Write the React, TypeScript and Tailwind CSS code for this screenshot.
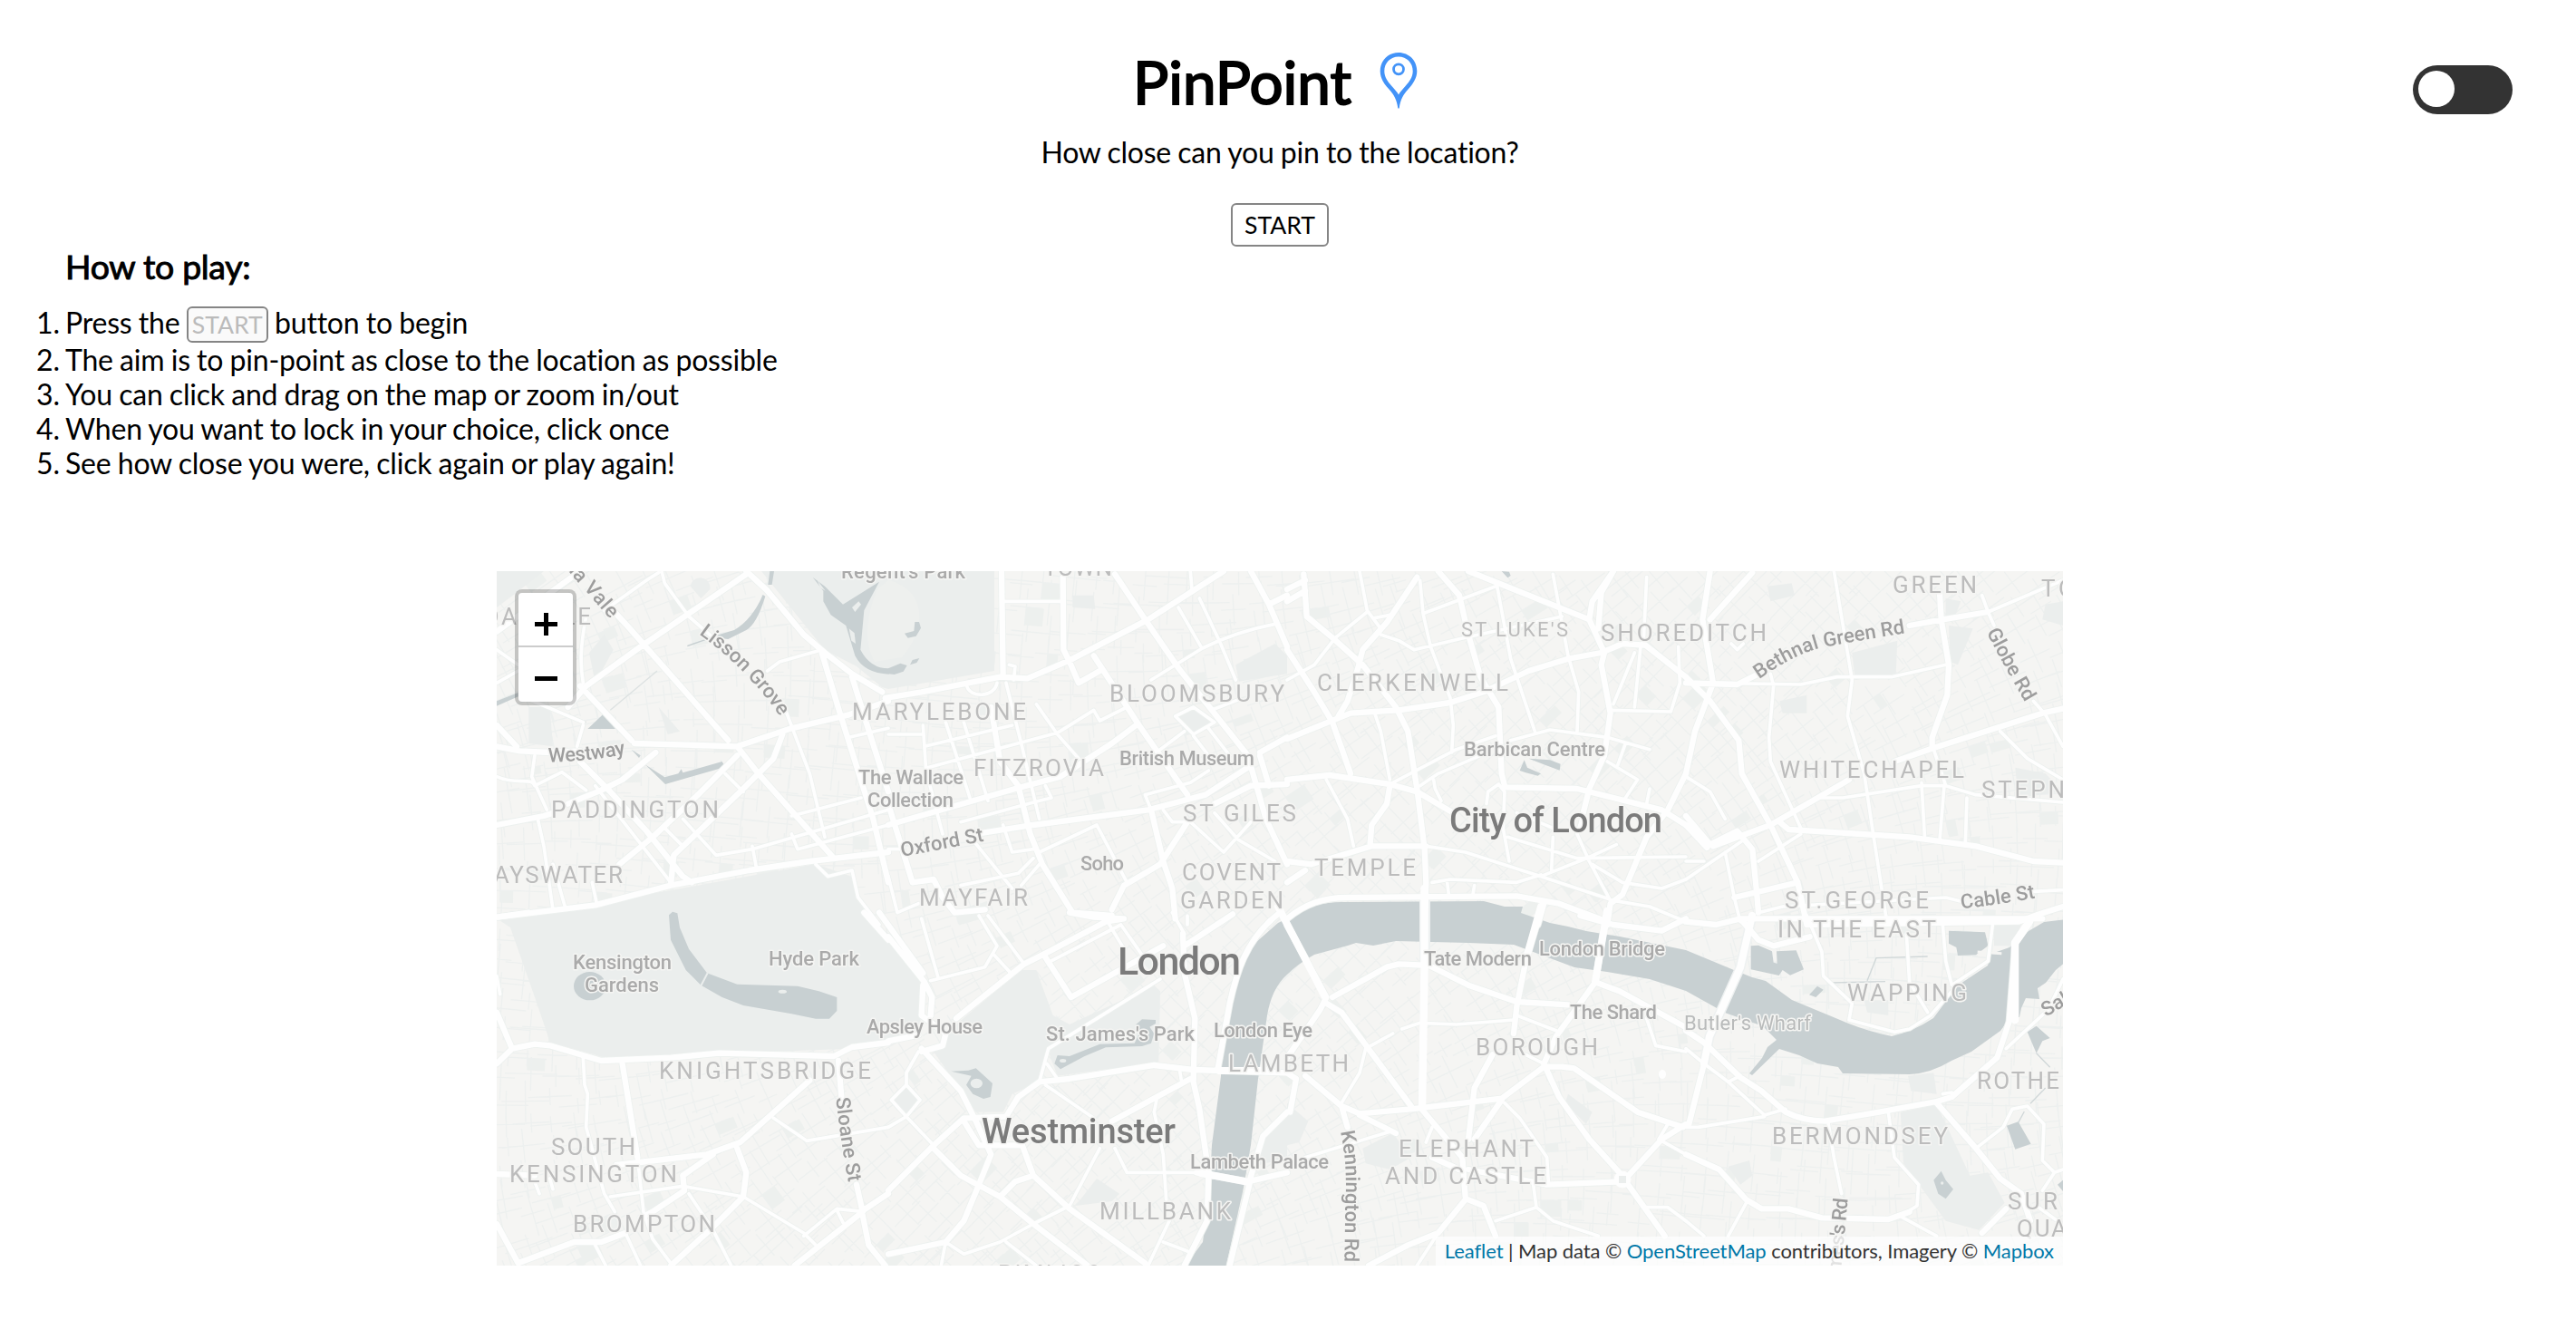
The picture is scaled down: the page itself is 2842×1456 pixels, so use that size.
import React from "react";

type District = { x: number; y: number; major: string; minor: string };

// Each district is drawn on its own 1320x1200 sheet, at three units per pixel.
const districts: District[] = [
  {
    x: 540, y: 620,
    major:
      "M24 230L300 30M400 150L460 215L790 590M260 480L320 410L500 280L850 40M850 30L920 95L1040 240L1110 300L1200 370L1300 430M24 610L100 625L200 630L300 625M480 600L820 610L1000 550L1190 505L1320 460M820 610L890 700L1140 980M300 410L470 590M24 540L90 610M550 630L440 720L370 755L260 800M24 870L180 840L210 830M300 660L400 760L520 890L640 1040L670 1060M820 640L690 770L540 910L430 1000M970 570L940 650L830 760L610 970L600 1070M24 1175L350 1135L600 1070L860 1020L1060 990L1320 960M1100 300L1160 500L1270 850L1320 1060M1200 380L1250 540L1320 760",
    minor:
      "M320 180C300 280 300 340 310 400M570 30L580 70L660 180L740 250M920 360L960 330L1100 290M980 490L1060 700L1110 910M24 710C90 740 140 710 150 740L240 695L320 755M150 640L140 710L190 820M160 850L180 940L210 1150M210 1000L250 1140M340 1060L355 1130M580 880L640 940M780 700L840 760M640 850L750 970L870 950L1320 820M870 940L885 1020M1000 840L1230 780M1190 580L1320 550M24 290L95 340M24 400L95 360M310 540L290 610M120 450L310 530M350 740L600 1060M1080 1000L1120 1040L1200 1020L1220 1110L1290 1200M1000 900L1020 950L1320 870M380 160L520 60L560 35",
  },
  {
    x: 980, y: 620,
    major:
      "M-10 450L110 430L370 380L460 385L600 325L860 190L1110 30M375 30L380 380M578 50L580 290L600 330L630 400L700 360M750 40L850 190L960 350L1190 640L1250 850L1320 1000M680 310L830 540L990 770M0 870L420 750L570 710L740 600L820 540M290 900L480 870L860 820L1050 770L1190 680M340 480L370 660L430 740L470 900L510 1000L610 1160L740 1170M870 820L910 990L940 1080L950 1180M990 860L900 1000L780 1070L740 1150M1200 30L1260 140L1320 280M1260 140L1320 110M1080 800L1200 740L1320 735M1230 640L1260 740M1320 580L1230 630M0 800L80 1060L150 1050L180 1110L220 1160L320 1150",
    minor:
      "M385 130L570 130M960 150L1035 280M1030 120L1100 270L1150 390M870 390L1040 285Q1150 230 1280 205M490 470L560 570L630 650M120 610L410 540M130 680L560 565L680 490L700 525L790 480M115 540L125 690L180 900M190 530L270 780M250 530L330 790M390 400L440 600L500 850M0 570L110 570M950 510L1010 480L1080 530L1010 570ZM1060 550L1130 640M1010 575L1060 640M1070 490L1160 455M900 620L980 560M850 770L1000 730L1060 690M850 770L870 820M240 860L500 790L540 780L520 740M380 870L410 960L480 950M500 960L690 870L790 1060M500 1000L440 1070M480 980L430 1030L240 1070M280 920L410 1080M1000 860L1110 960L1200 860M1080 830L1160 920L1280 990M910 820L940 860L990 860M260 410C270 450 350 450 360 400M0 950L50 950M0 1040L30 1160L100 1130M1000 30L1005 90M400 340L420 345L415 390",
  },
  {
    x: 1420, y: 620,
    major:
      "M0 90L60 60M0 130L60 95M55 40L65 180L150 250L250 340L360 480L400 560L430 750L455 950L460 1060L455 1200M0 290L90 430L150 530L210 700M0 585L210 500L370 490L540 465L650 430L800 360L930 320L1040 300L1110 270L1180 275M430 50L330 200L250 290L235 350L200 460L170 510M500 30L570 110L600 240L640 380L700 480L710 700L720 740M600 30L1000 190L1050 300L1040 340L1070 500L1050 640L1000 750L980 830M1080 30L1010 130L1000 190M1080 30L1040 100L1030 220M1180 270L1320 380M0 720L140 705L340 735L430 760L550 830M720 745L960 750L1240 820L1320 870M340 740L330 800L280 870L275 930M0 1060L60 1020M0 990L80 1000L280 940L460 940M0 1180C60 1130 120 1110 200 1110L760 1105L900 1130L1060 1190M1320 700L1260 820L1190 910L1110 1100L1070 1130L1060 1200M850 1130L830 1200",
    minor:
      "M460 940L590 960L840 1040L1080 1120L1200 1140L1320 1190M240 30L265 160L310 220M265 165L160 250L90 340L0 390M440 60L450 170L475 280L540 450L550 540L545 630M450 170L690 80M290 185L340 175M310 240L370 260L420 290L590 250L910 180M695 80L740 320L820 560M880 40L930 310L965 430L960 560M740 590L870 555L1060 580L1200 620M290 500L310 560L340 720M350 730L560 620L690 575M440 740L500 700L640 640M485 720L490 750L510 790M660 800L665 760L700 735L720 760L715 880L735 990M130 720L200 850L220 940M1070 490L1270 495L1300 400L1295 280M1150 300L1080 470M1170 280L1150 480M1190 50L1180 260M1060 660L1160 720L1120 780M1120 600L1095 670M730 910L960 980L1320 975M840 1040L980 985L1090 935M980 830L960 900L1000 990L1070 1120M1010 1000L1110 1060L1240 1080L1320 1050M480 1060L540 1050L760 1060L840 1035M530 1060L535 1100M620 1070L615 1100M880 910L875 1020M760 830L880 880M1200 750L1190 800",
  },
  {
    x: 1860, y: 620,
    major:
      "M80 30L55 190L90 400L30 560L0 700M220 35L170 90L80 190M0 400L170 405L240 370M740 210L850 190L1000 165M0 380L80 460L175 590L185 700L280 870L370 1060L400 1200M840 100L845 190L870 340L865 440L815 580L815 610M90 940L280 870L540 720M690 660L820 615L1180 500L1248 485M310 860L340 885L740 910L960 940L1150 990L1248 995M0 840L80 935L170 890L220 950L235 1100L240 1160M0 870L70 945M160 1110L370 1060M1248 1140L1170 1165L1100 1190L400 1200",
    minor:
      "M0 1050L190 920M1000 165L1248 60M130 960L160 1110L180 1190M490 30L510 150L550 390L535 510L590 700L620 900L665 1190M280 370L290 410L275 580L280 660L380 880M90 400L380 405L500 380L680 380L860 340M980 110L1000 165L1020 210M1150 460L1190 505L1248 610M1040 560L1130 650L1248 720M440 780L520 780L780 740L860 740L960 770L1248 795M780 730L790 905M855 740L840 920M930 780L925 930M820 620L860 740M0 710L80 760L130 850M0 990L60 990M240 990L380 900M240 1160L320 1140L860 1110L920 1125M1150 1090L1248 1085M150 270L170 290L190 270",
  },
  {
    x: 540, y: 1010,
    major:
      "M24 490L75 440L150 425L200 430L370 480L600 470L760 455L1140 465L1200 435L1320 420M24 320L75 440M24 5L130 -10M1060 545L830 750L720 790L420 825M740 790L640 860L645 910L540 980M24 855L150 860M440 490L490 800M540 980L500 1000M24 1020L95 1150L280 1080L370 1080L450 1050M820 770L850 850L840 930L730 1040L600 1158M1155 480L1165 600M1215 890L1235 980L1010 1158M1235 990L1255 1090L1310 1158M1230 980L1320 920M1240 -10L1320 80",
    minor:
      "M490 800L510 980L540 1070L600 1150M310 470L315 560L325 590L320 700L380 920L415 980M450 1050L500 1158M400 930L640 895L840 930L1040 1050L1080 1090M660 920L740 1040L800 1158M940 670L1050 745L1320 700M1040 1060L1150 970L1240 980M1150 975L1170 1015M350 1090L385 1158M24 200L35 260M150 880L165 920M200 870L210 905",
  },
  {
    x: 980, y: 1010,
    major:
      "M0 70L120 220L145 270L140 330M-30 -10L115 190M115 230L110 330L190 390L180 430L110 450M0 415L100 395M225 340L450 160L520 125L720 20L780 10M515 130L605 270L910 100M110 440L240 580L290 680L340 790L300 890L250 1010L190 1080L0 1120M0 910L150 760L250 670L390 665L430 600L500 550L600 540L880 495L1010 510L1320 520M975 60L980 190L1015 340L1010 550L1030 640L1060 850L1055 1010L980 1158M980 100L1140 -5M1290 -5C1180 80 1150 200 1130 290L1090 510M1000 540L740 680M440 750L480 860L600 970L850 1150M150 770L240 860L370 930L480 1020L660 1158M370 930L420 880L480 860M1020 850L1190 880L1320 850M1130 1158L1195 890M1195 880L1240 730L1320 650M250 680L300 760L440 760M600 -10L680 5L780 10",
    minor:
      "M110 10L165 205M140 215L320 170L360 100L300 0M330 0L450 160M350 130L410 195M520 560L680 670M900 210L530 440L500 550M525 490L560 540M890 600L880 650L910 790L920 940M750 770L790 850L1030 850M700 770L600 960L480 1020L370 1080L250 1120L190 1080L175 1158M390 1080L490 1158M100 450L60 520L60 560L105 610L60 665L10 610L60 560M60 665L150 760M60 665L0 700M930 1010L860 1158M910 1080L990 1110M540 150L770 30L840 130M720 10L780 110M940 -10L980 60M965 515L970 545M990 30L990 0",
  },
  {
    x: 1420, y: 1010,
    major:
      "M0 30L130 270L110 310L0 470M130 290L180 320L410 630M150 270L330 170L370 160L470 165L600 230L760 285L930 295M455 0L455 160L445 630M445 640L580 800L590 930M60 530L180 630L240 655L410 640L710 605L850 500L910 500L950 505L1160 650L1310 700M835 0L790 150L760 300L750 390M680 460L620 570L600 740M1055 0L1020 220L970 290L890 400L850 490M1020 220L1100 250L1320 370M710 610L620 740M850 490L900 600L1000 740L1100 850L1250 1060M0 520L30 540L10 650M180 630L200 700M600 840L860 890L1110 880M590 940L500 1050L400 1090L270 1158M600 940L650 960L690 1060M970 0L1080 30L1240 50L1320 10M240 660L360 720M480 800L570 840M1130 860L1240 740L1320 690",
    minor:
      "M500 1050L430 1158M260 440L350 390M380 375L440 355L560 360L750 345M260 440L240 520L180 620M760 330L890 380M790 460L850 490M720 620L770 670L860 800L865 880M60 800L340 715M815 890L825 965L690 1010M825 965L880 1010L1030 1060M1190 340L1220 430L1320 450M1260 690L1230 740L1320 790M1190 965L1260 965L1320 1010M480 700L460 750",
  },
  {
    x: 1860, y: 1010,
    major:
      "M0 20L100 30L180 10L240 80L290 100L410 70M0 380L60 420L180 535L250 580L330 650Q390 680 460 680L640 650L830 615L880 600L1030 470L1070 350L1090 90L1140 20M830 620L960 770L1040 870L1110 920L1140 1010M0 790L110 840L200 940L250 970L340 970L450 1000L670 1005L740 980M180 10L1180 10M1060 970L980 1050M60 490L10 690",
    minor:
      "M0 440L60 490L140 550L260 660L330 640M140 550L180 530M0 700L40 700L260 665M400 0L450 120L455 200L550 290L540 345L690 385L740 375L810 330L880 250M850 30L860 150L880 230L1000 150L1015 30M730 60L740 220L800 320M470 680L490 800L515 920M670 650L690 800L770 890L765 960L710 995L830 1060M960 770L1050 700L1080 640L1130 630L1185 690L1180 810L1220 850L1248 840M1220 850L1180 910M200 950L140 1060M0 1010L60 1060M1160 960L1230 1010M1060 440L1200 310L1248 210M850 590L880 585",
  },
];

type Label = [text: string, start: number, end: number, baseline: number];

const areas: Label[] = [
  ["MAIDA VALE", 478, 652, 689], ["PADDINGTON", 608, 793, 901.5], ["BAYSWATER", 527, 687, 973.5],
  ["MARYLEBONE", 940, 1132, 793.5], ["FITZROVIA", 1074, 1218, 855.5], ["BLOOMSBURY", 1224, 1417, 773.5],
  ["TOWN", 1151, 1227, 635], ["ST GILES", 1305, 1430, 906], ["COVENT", 1304, 1413, 971],
  ["GARDEN", 1302, 1416, 1001.5], ["MAYFAIR", 1014, 1134, 999], ["CLERKENWELL", 1453, 1664, 762],
  ["SHOREDITCH", 1766, 1949, 706.5], ["GREEN", 2088, 2181, 653.5], ["TO", 2252, 2289, 658],
  ["WHITECHAPEL", 1963, 2167, 857.5], ["STEPN", 2186, 2278, 880], ["TEMPLE", 1450, 1562, 965.5],
  ["ST.GEORGE", 1969, 2128, 1002], ["IN THE EAST", 1961, 2136, 1033.5], ["WAPPING", 2038, 2170, 1104],
  ["BERMONDSEY", 1955, 2149, 1261.5], ["ROTHE", 2181, 2272, 1200.5], ["SUR", 2215, 2270, 1333.5],
  ["QUA", 2225, 2280, 1364], ["BOROUGH", 1628, 1763, 1163.5], ["ELEPHANT", 1543, 1692, 1276],
  ["AND CASTLE", 1528, 1706, 1306], ["LAMBETH", 1355, 1488, 1181.5], ["MILLBANK", 1213, 1358, 1344.5],
  ["PIMLICO", 1101, 1216, 1414], ["KNIGHTSBRIDGE", 727, 961, 1190], ["SOUTH", 608, 701, 1273.5],
  ["KENSINGTON", 562, 747, 1303.5], ["BROMPTON", 632, 789, 1359],
];

const places: Label[] = [
  ["Regent's Park", 928, 1065, 637.5], ["The Wallace", 947, 1063, 865], ["Collection", 957, 1052, 889.5],
  ["British Museum", 1235, 1384, 843.5], ["Soho", 1192, 1240, 960], ["Barbican Centre", 1615, 1771, 833.5],
  ["Kensington", 632, 741, 1069], ["Gardens", 645, 727, 1093.5], ["Hyde Park", 848, 948, 1065],
  ["Apsley House", 956, 1084, 1139.5], ["St. James's Park", 1154, 1318, 1147.5], ["London Eye", 1339, 1448, 1143.5],
  ["Lambeth Palace", 1313, 1466, 1289], ["Tate Modern", 1571, 1690, 1065], ["London Bridge", 1698, 1837, 1054],
  ["The Shard", 1732, 1828, 1123.5],
];

const streets: { id: string; text: string; d: string; x: number; y: number; length: number }[] = [
  { id: "maida", text: "ida Vale", d: "M235 0L420 212", x: 540, y: 620, length: 250 },
  { id: "lisson", text: "Lisson Grove", d: "M693 238Q850 350 965 515", x: 540, y: 620, length: 385 },
  { id: "westway", text: "Westway", d: "M195 662Q330 660 460 634", x: 540, y: 620, length: 258 },
  { id: "oxford", text: "Oxford St", d: "M45 975Q180 950 330 920", x: 980, y: 620, length: 278 },
  { id: "bethnal", text: "Bethnal Green Rd", d: "M242 388Q380 290 480 277Q600 255 760 230", x: 1860, y: 620, length: 515 },
  { id: "globe", text: "Globe Rd", d: "M995 232Q1050 340 1135 485", x: 1860, y: 620, length: 265 },
  { id: "cable", text: "Cable St", d: "M912 1147Q1030 1135 1180 1107", x: 1860, y: 620, length: 248 },
  { id: "sloane", text: "Sloane St", d: "M1147 603Q1165 770 1192 900", x: 540, y: 1010, length: 283 },
  { id: "kennington", text: "Kennington Rd", d: "M177 715Q200 820 193 950L190 1170", x: 1420, y: 1010, length: 432 },
  { id: "james", text: "mes's Rd", d: "M512 1180Q525 1060 537 925", x: 1860, y: 1010, length: 245 },
  { id: "salter", text: "Salter", d: "M1192 335L1380 225", x: 1860, y: 1010, length: 170 },
];

const river =
  "M1305 1400L1327 1370L1335 1303L1337 1263L1347 1187L1348 1157L1358 1097Q1366 1065 1385 1040L1410 1018L1427 1010Q1450 995 1480 995L1637 994L1660 1000L1680 1000L1678 1007L1710 1018L1730 1022L1750 1027L1787 1033L1860 1048L1913 1070L1933 1078L1948 1082L1977 1103L2037 1128Q2062 1138 2087 1143Q2112 1137 2133 1123L2160 1087L2193 1065L2197 1052L2217 1045L2233 1030L2255 1017L2280 1014L2280 1060L2268 1070L2257 1084L2248 1090L2250 1102L2235 1101L2230 1112L2228 1122L2218 1122L2207 1137L2175 1160L2153 1170Q2130 1184 2107 1185L2033 1184L2028 1177L2005 1173L1985 1164L1963 1157L1933 1186L1930 1184L1944 1167L1950 1155L1960 1147L1945 1132L1903 1117L1860 1093L1820 1080L1773 1072L1737 1067L1705 1055L1670 1042L1620 1040L1540 1038L1515 1043L1496 1040L1487 1043L1450 1053Q1432 1063 1420 1075Q1403 1090 1398 1120L1388 1190L1380 1263L1372 1310L1352 1400Z";

// Small seeded generator, so the side streets come out the same on each render.
function makeRandom(seed: number) {
  let s = seed;
  return () => {
    s = (s * 1664525 + 1013904223) % 4294967296;
    return s / 4294967296;
  };
}

function buildSideStreets() {
  const rnd = makeRandom(77);
  let lines = "";
  let blocks = "";
  for (let y = 636; y < 1400; y += 26) {
    for (let x = 550; x < 2276; x += 26) {
      const angle = -0.35 + Math.sin(x / 260 + y / 190) * 0.45;
      const ux = Math.cos(angle);
      const uy = Math.sin(angle);
      const px = x + rnd() * 12;
      const py = y + rnd() * 12;
      const a = 10 + rnd() * 20;
      const b = 8 + rnd() * 18;
      lines += `M${(px - ux * a).toFixed(1)} ${(py - uy * a).toFixed(1)}l${(ux * 2 * a).toFixed(1)} ${(uy * 2 * a).toFixed(1)}`;
      lines += `M${(px + uy * b).toFixed(1)} ${(py - ux * b).toFixed(1)}l${(-uy * 2 * b).toFixed(1)} ${(ux * 2 * b).toFixed(1)}`;
      if (rnd() < 0.07) {
        const w = 8 + rnd() * 18;
        const h = 8 + rnd() * 12;
        blocks += `M${px.toFixed(1)} ${py.toFixed(1)}l${(ux * w).toFixed(1)} ${(uy * w).toFixed(1)}l${(-uy * h).toFixed(1)} ${(ux * h).toFixed(1)}l${(-ux * w).toFixed(1)} ${(-uy * w).toFixed(1)}z`;
      }
    }
  }
  return { lines, blocks };
}

const side = buildSideStreets();

const sheet = (x: number, y: number) => `translate(${x} ${y}) scale(0.33333)`;

function Labels({ items, className }: { items: Label[]; className: string }) {
  return (
    <g className={className}>
      {items.map(([text, start, end, baseline]) => (
        <text key={text + start} x={start} y={baseline} textLength={end - start} lengthAdjust="spacing">
          {text}
        </text>
      ))}
    </g>
  );
}

function LondonMap() {
  return (
    <svg viewBox="548 630 1728 766" className="block h-full w-full font-['Roboto',sans-serif]" role="img" aria-label="Map of London">
      <g className="blur-[0.6px]">
        <rect x="540" y="622" width="1744" height="782" fill="#f5f5f3" />
        <path d={side.blocks} fill="#edf0ee" />
        <path d={side.lines} stroke="#edf0ef" strokeWidth="1.3" fill="none" />

        <g fill="#ebeeed">
          <path d="M548 1013L740 982L900 953L940 967L953 1000L1017 1083L1015 1140L933 1157L793 1162L673 1168L607 1150L590 1100L563 1023Z" />
          <path d="M840 630L1097 630L1097 740L980 760L973 758L945 735L910 717Z" />
          <path d="M548 630L600 630L568 655L548 670Z" />
          <g transform={sheet(980, 1010)}>
            <path d="M200 380L440 180L490 180L545 330L600 360L880 230L900 250L895 485L560 530L530 450L500 550L410 590L380 650L290 650L150 450Z" />
            <path d="M690 870L765 920L740 945L620 960Z" />
            <ellipse cx="58" cy="610" rx="44" ry="44" />
            <path d="M1320 650L1240 730L1210 830L1320 800Z" />
          </g>
          <g transform={sheet(1420, 1010)}>
            <path d="M0 620L70 680L40 750L0 760ZM250 770L350 720L410 800L340 840L260 820ZM930 590L1010 650L990 690L920 620Z" />
          </g>
          <g transform={sheet(1860, 1010)}>
            <path d="M710 650L830 625L940 860L1000 850L1055 950L970 1040L860 1010L720 820ZM140 830L210 810L220 860L180 890ZM1020 30L1110 30L1080 100L1020 100ZM590 280L670 280L670 330L600 320ZM735 530L820 520L830 590L745 580Z" />
          </g>
          <g transform={sheet(1860, 620)}>
            <path d="M550 300L700 260L695 370L560 390ZM860 120L910 130L890 180L860 180ZM870 210L950 220L900 340L875 330ZM1190 140L1248 130L1248 210L1180 190ZM310 460L400 440L400 500L320 500ZM1090 680L1190 700L1248 760L1100 780ZM270 80L350 70L360 110L280 130Z" />
          </g>
          <g transform={sheet(980, 620)}>
            <path d="M1150 340L1280 270L1320 310L1320 370L1160 395ZM960 510L1010 480L1080 530L1010 565ZM610 110L680 110L685 155L610 150Z" />
          </g>
          <g transform={sheet(540, 620)}>
            <path d="M330 300L380 240L410 290L350 400ZM130 480L200 480L210 610L130 600ZM560 480L630 560L590 570ZM665 80A30 30 0 0 1 730 90L700 120Z" />
          </g>
        </g>
        <path d="M980 640C1020 650 1025 690 995 725L965 730C953 710 955 680 968 650Z" fill="#eef0ee" />

        <g fill="#c8d0d2">
          <path d={river} />
          <g transform={sheet(540, 1010)}>
            <path d="M594 -2L606 -13L622 -8L630 40L660 110L720 190L820 227L1020 233L1090 250L1150 270L1150 315L1125 341L1080 341L1000 325L840 297L770 270L700 230L650 180L600 80Z" />
            <ellipse cx="332" cy="233" rx="53" ry="47" />
            <path d="M722 190L700 232" stroke="#ebeeed" strokeWidth="6" />
            <ellipse cx="970" cy="251" rx="14" ry="6" fill="#ebeeed" />
          </g>
          <g transform={sheet(540, 620)}>
            <path d="M1070 50L1110 80L1170 140L1235 100L1290 65L1240 160L1228 290Q1260 352 1322 352L1322 371Q1240 368 1210 310L1180 210L1130 175L1105 130L1105 95Z" />
            <path d="M760 240L810 225Q870 190 905 108L913 113Q885 205 850 225L790 255L740 250L655 280L655 275Z" />
            <path d="M928 30L942 30L935 75L922 75ZM325 552L375 505L417 552ZM24 460L95 432L95 445L24 476ZM515 670L580 712L625 700L635 685L640 697L770 660L780 678L582 735ZM470 620L500 640L495 648Z" />
            <path d="M400 490L555 360" stroke="#dde2e2" strokeWidth="4" />
            <path d="M160 465L320 530" stroke="#d4dada" strokeWidth="6" strokeDasharray="6 3" />
            <path d="M1085 60L1112 95L1095 85ZM1200 150L1222 130L1230 140L1210 165ZM1190 220L1208 235L1212 270L1198 260Z" fill="#ebeeed" />
          </g>
          <g transform={sheet(980, 620)}>
            <path d="M0 352L40 335L62 342L50 362L20 372L0 370ZM88 198L102 198L108 218L92 245L65 251L54 236L85 228ZM103 318L94 333L72 340L80 324Z" />
          </g>
          <g transform={sheet(1420, 620)}>
            <path d="M770 690L785 655L795 680L840 700L830 707L790 697ZM800 650L870 655L905 668L902 689L850 670ZM710 30L735 32L740 45L730 52Z" />
          </g>
          <g transform={sheet(980, 1010)}>
            <path d="M550 490L560 462L600 465L700 425L815 422L830 390L820 360L840 343L885 345L885 357L865 368L880 390L870 422L840 432L720 436L650 465L570 508Z" />
            <path d="M208 515L265 512L290 505L345 555L338 600L315 606L280 590L258 560L275 530Z" />
            <ellipse cx="292" cy="555" rx="20" ry="16" fill="#ebeeed" />
            <ellipse cx="578" cy="480" rx="11" ry="6" fill="#ebeeed" />
            <path d="M840 382L862 384L850 405L828 408Z" fill="#ebeeed" />
          </g>
          <g transform={sheet(1860, 1010)}>
            <path d="M215 100L240 98L285 118L290 155L302 158L300 118L365 115L390 178L345 197L320 180L308 198L215 178ZM408 262L435 233L455 245L430 270ZM870 50L990 55L995 75L1000 100L960 130L900 132L895 105L870 92ZM1130 385L1160 365L1205 405L1180 415L1160 455ZM1062 695L1100 682L1142 755L1090 773ZM820 875L845 845L860 875L885 905L860 937L835 920ZM1230 890L1248 875L1248 912Z" />
            <path d="M600 215L630 140L800 135M480 222L660 218M1160 455L1205 502M1190 570L1140 622M1120 648L1100 685" fill="none" stroke="#d0d7d8" strokeWidth="4" />
            <path d="M965 120L1045 125" stroke="#f5f5f3" strokeWidth="9" />
            <circle cx="848" cy="885" r="5" fill="#ebeeed" />
          </g>
        </g>

        {districts.map((d) => (
          <g key={`${d.x}-${d.y}`} transform={sheet(d.x, d.y)} fill="none" strokeLinejoin="round" strokeLinecap="round">
            <path d={d.major} stroke="#edf1ef" strokeWidth="24" />
            <path d={d.minor} stroke="#edf1ef" strokeWidth="16" />
          </g>
        ))}
        <g fill="none" stroke="#eef1f1" strokeLinejoin="round">
          <path d="M1572 990V1065" strokeWidth="12" />
          <path d="M1933 1010L1920 1067L1886 1143L1880 1173" strokeWidth="11" />
        </g>
        {districts.map((d) => (
          <g key={`${d.x}-${d.y}-fill`} transform={sheet(d.x, d.y)} fill="none" stroke="#fefefe" strokeLinejoin="round" strokeLinecap="round">
            <path d={d.major} strokeWidth="19" />
            <path d={d.minor} strokeWidth="11" />
          </g>
        ))}
        <g fill="none" stroke="#fefefe" strokeLinejoin="round" strokeLinecap="round">
          <path d="M1571.500 980V1070L1569 1220" strokeWidth="8.500" />
          <path d="M1933 1010L1920 1067L1886 1143L1880 1173" strokeWidth="8" />
          <path d="M1410 1000L1462 1100M1700 1000L1683 1060M1773 1005L1760 1083M1345 1181H1400M1325 1294L1378 1304" strokeWidth="8" />
          <path d="M2223 1125V1040L2238 1018" strokeWidth="8.500" />
          <ellipse cx="1834" cy="1185" rx="4" ry="5" fill="#fefefe" strokeWidth="0" />
          <circle cx="1790" cy="1301" r="9" fill="#fefefe" strokeWidth="1" />
        </g>
        <rect x="1786" y="1297" width="8" height="8" fill="#ebeeed" />

        <g stroke="#f5f5f3" strokeWidth="3" strokeLinejoin="round" style={{ paintOrder: "stroke" }}>
          <Labels items={areas} className="fill-[#bcbcbc] text-[26px]" />
          <text x="1612" y="701.5" textLength="118" className="fill-[#bcbcbc] text-[22px]">ST LUKE'S</text>
          <Labels items={places} className="fill-[#aaaaaa] text-[22px] font-medium" />
          <text x="1858" y="1136" textLength="140" className="fill-[#b9bbbb] text-[22px]">Butler's Wharf</text>
          {streets.map((s) => (
            <g key={s.id} transform={sheet(s.x, s.y)}>
              <path id={s.id} d={s.d} fill="none" stroke="none" />
              <text className="fill-[#9d9d9d] text-[66px] font-medium" strokeWidth="9">
                <textPath href={`#${s.id}`} textLength={s.length}>{s.text}</textPath>
              </text>
            </g>
          ))}
          <g className="fill-[#7b7b7b] font-medium">
            <text x="1599" y="917.500" textLength="235" className="text-[38px]">City of London</text>
            <text x="1233" y="1075" textLength="136" className="text-[43px]">London</text>
            <text x="1083" y="1260.500" textLength="214" className="text-[38px]">Westminster</text>
          </g>
        </g>
      </g>
    </svg>
  );
}

function PinIcon() {
  return (
    <svg viewBox="0 0 42 62" className="h-[62px] w-[42px]" fill="#4393f8">
      <path
        fillRule="evenodd"
        d="M21 0C32.500 0 41.300 8.800 41.300 20.500C41.300 28 37 34.500 31.500 40.500C26 46.500 23 52 21.700 61.500H20.300C19 52 16 46.500 10.500 40.500C5 34.500 .7 28 .7 20.500C.7 8.800 9.500 0 21 0ZM21 4.600C12 4.600 5.300 11.500 5.300 20.500C5.300 27 9 32 13.500 37C17 41 19.500 43.500 21 46.500C22.500 43.500 25 41 28.500 37C33 32 36.700 27 36.700 20.500C36.700 11.500 30 4.600 21 4.600Z"
      />
      <circle cx="21" cy="18.300" r="5.500" fill="none" stroke="#4393f8" strokeWidth="2.800" />
    </svg>
  );
}

const link = "text-[#0078a8]";

const steps: React.ReactNode[] = [
  <>
    Press the{" "}
    <span className="inline-block h-[40px] w-[90px] rounded-[6px] border-2 border-[#858585] bg-[#fafafa] text-center align-baseline text-[26.600px] leading-[36px] tracking-normal text-[#bbbbbb]">
      START
    </span>{" "}
    button to begin
  </>,
  "The aim is to pin-point as close to the location as possible",
  "You can click and drag on the map or zoom in/out",
  "When you want to lock in your choice, click once",
  "See how close you were, click again or play again!",
];

export default function App() {
  return (
    <div className="flex h-[1456px] w-full flex-col bg-white font-['Lato',sans-serif] text-[32px] leading-[38px] text-black">
      <header className="flex h-[272px] items-start justify-between">
        <div className="w-[162px]" />
        <div className="flex flex-col items-center">
          <div className="-ml-[10px] mt-[51px] flex h-[79px] items-start gap-[31px]">
            <h1 className="text-[65.500px] leading-[78px] [-webkit-text-stroke:2px_#000]">PinPoint</h1>
            <div className="mt-[7px]">
              <PinIcon />
            </div>
          </div>
          <p className="mt-[19px] tracking-[-0.22px] [word-spacing:-0.700px]">How close can you pin to the location?</p>
          <button className="mt-[37px] h-[48px] w-[108px] rounded-[6px] border-2 border-[#858585] bg-white text-[26.600px] leading-[44px]">
            START
          </button>
        </div>
        <div className="flex w-[180px] pt-[72px]">
          <button className="flex h-[54px] w-[110px] rounded-full bg-[#333333] p-[6px]" aria-label="Toggle theme">
            <span className="h-[40px] w-[40px] rounded-full bg-white" />
          </button>
        </div>
      </header>

      <section className="h-[358px] pl-[72px]">
        <h2 className="text-[37.440px] leading-[43px] tracking-[-0.300px] [-webkit-text-stroke:1px_#000]">How to play:</h2>
        <ol className="mt-[20px] tracking-[-0.200px] [word-spacing:-0.700px]">
          {steps.map((step, i) => (
            <li key={i} className={i === 0 ? "-ml-[32px] flex h-[43px] leading-[42px]" : "-ml-[32px] flex h-[38px]"}>
              <span className="w-[32px]">{i + 1}.</span>
              <span className="whitespace-nowrap">{step}</span>
            </li>
          ))}
        </ol>
      </section>

      <main className="relative ml-[548px] h-[766px] w-[1728px] overflow-hidden bg-[#f5f5f3]">
        <LondonMap />
        <div className="absolute left-[20px] top-[20px] flex w-[68px] flex-col overflow-hidden rounded-[8px] border-4 border-black/20 bg-white bg-clip-padding">
          <button className="flex h-[60px] items-center justify-center border-b-2 border-[#cccccc]" aria-label="Zoom in">
            <svg viewBox="0 0 25 25" className="mt-[10px] h-[25px] w-[25px]">
              <path d="M0 12.500H25M12.500 0V25" stroke="#000" strokeWidth="5" />
            </svg>
          </button>
          <button className="flex h-[60px] items-center justify-center" aria-label="Zoom out">
            <svg viewBox="0 0 25 25" className="mt-[8px] h-[25px] w-[25px]">
              <path d="M0 12.500H25" stroke="#000" strokeWidth="5" />
            </svg>
          </button>
        </div>
        <div className="absolute bottom-0 right-0 h-[32px] whitespace-nowrap bg-white/70 px-[10px] text-[22px] leading-[32px] tracking-[-0.070px] text-[#333333]">
          <a className={link}>Leaflet</a> | Map data © <a className={link}>OpenStreetMap</a> contributors, Imagery ©{" "}
          <a className={link}>Mapbox</a>
        </div>
      </main>
    </div>
  );
}
